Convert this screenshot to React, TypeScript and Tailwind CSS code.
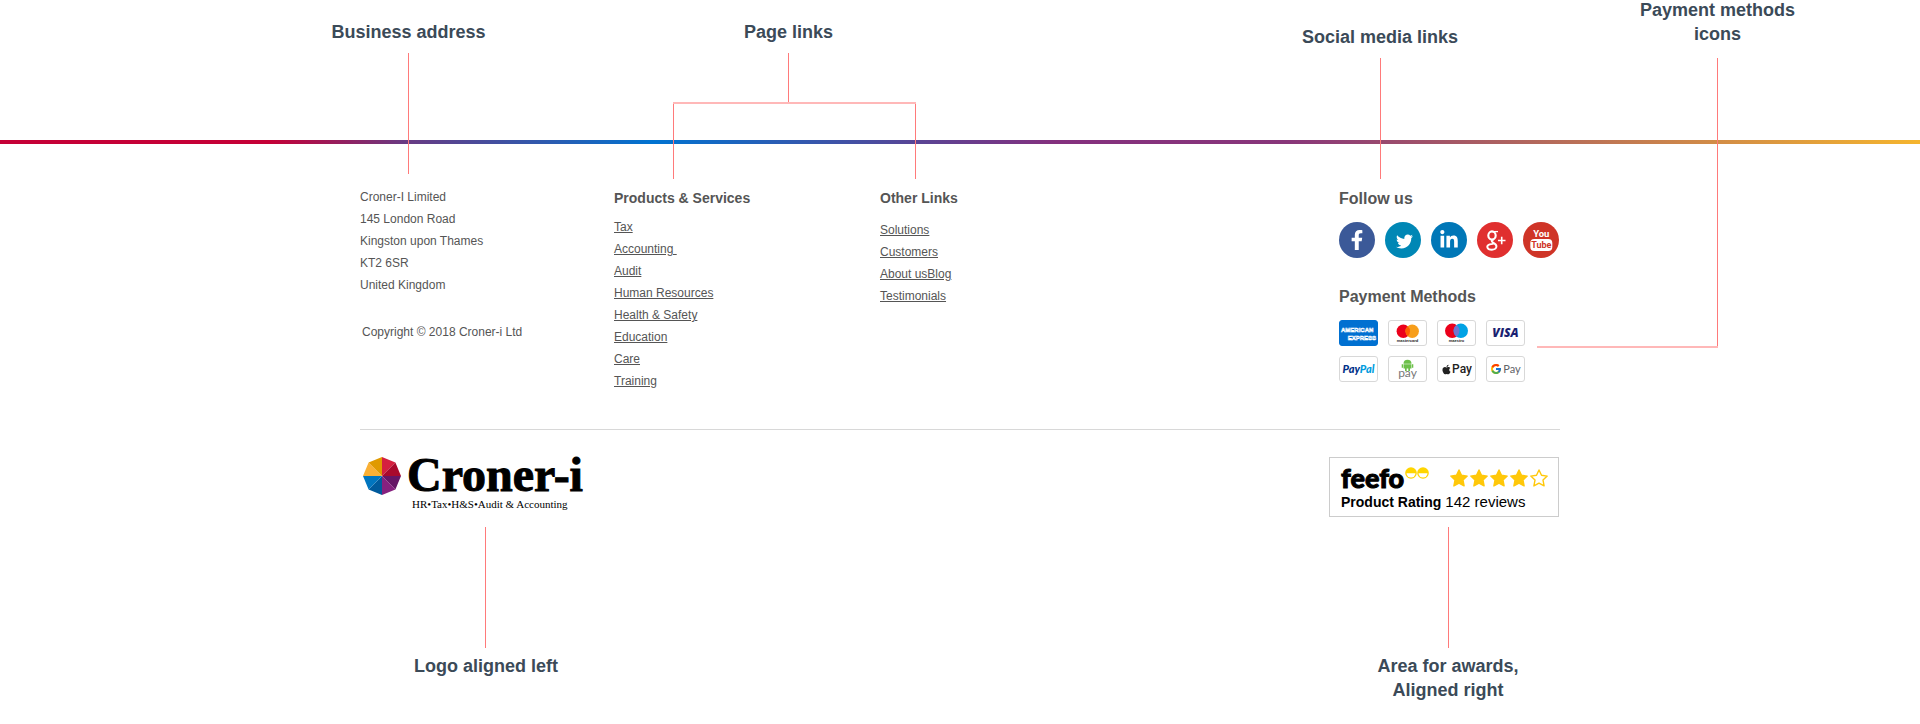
import React from "react";
import { FaFacebookF, FaTwitter, FaLinkedinIn, FaApple } from "react-icons/fa";
import { FcGoogle } from "react-icons/fc";

const address = ["Croner-I Limited", "145 London Road", "Kingston upon Thames", "KT2 6SR", "United Kingdom"];
const products = ["Tax", "Accounting\u00a0", "Audit", "Human Resources", "Health & Safety", "Education", "Care", "Training"];
const others = ["Solutions", "Customers", "About usBlog", "Testimonials"];

function Callout({ lines, className = "" }: { lines: string[]; className?: string }) {
  return (
    <div className={`flex justify-center text-center text-lg leading-6 font-bold whitespace-nowrap text-[#3b4a58] ${className}`}>
      <p>
        {lines.map((line) => (
          <span key={line} className="block">{line}</span>
        ))}
      </p>
    </div>
  );
}

function Connectors() {
  return (
    <svg
      className="pointer-events-none absolute top-0 left-0 z-10 h-[650px] w-full overflow-visible"
      fill="none"
      stroke="#ff7a7a"
      aria-hidden="true"
    >
      <path d="M48.5 53V174M428.5 53V102M313.5 102V179M555.5 102V179M1020.5 58V179M1357.5 58V348M125.5 527V648M1088.5 527V648" />
      <path d="M313 103H556M1177 347H1358" stroke="#ffb8b8" strokeWidth="2" />
    </svg>
  );
}

function LinkList({ items }: { items: string[] }) {
  return (
    <ul>
      {items.map((item) => (
        <li key={item}>
          <a href="#" className="underline">{item}</a>
        </li>
      ))}
    </ul>
  );
}

function Social({ label, className, children }: { label: string; className: string; children: React.ReactNode }) {
  return (
    <a href="#" aria-label={label} className={`flex size-9 items-center justify-center rounded-full text-white ${className}`}>
      {children}
    </a>
  );
}

function Card({ label, children, className = "border-[#d8d8d8] bg-white" }: { label: string; children: React.ReactNode; className?: string }) {
  return (
    <li aria-label={label} className={`flex h-[26px] w-[39px] items-center justify-center overflow-hidden rounded-[3px] border ${className}`}>
      {children}
    </li>
  );
}

function GooglePlus() {
  return (
    <svg viewBox="0 0 36 36" className="size-9" fill="none" stroke="#fff">
      <ellipse cx="15" cy="13.500" rx="3.700" ry="4.100" strokeWidth="2.100" />
      <path d="M15.500 9.600H21" strokeWidth="1.300" />
      <path d="M16.500 17.400c-2 1-2.300 1.900-.8 3l2.200 1.500c2.700 1.900 1.800 5.800-3 5.800-5.400 0-5.900-4.300-2.200-5.400 1.500-.4 2.700-.5 3.900-.4" strokeWidth="1.900" />
      <path d="M21 18.500H28.500M24.700 14.700V22.300" strokeWidth="1.600" />
    </svg>
  );
}

function YouTube() {
  return (
    <svg viewBox="0 0 36 36" className="size-9" fontFamily="'Liberation Sans Narrow', Roboto, sans-serif" fontWeight="700" textAnchor="middle">
      <text x="18.300" y="15.200" fontSize="9.500" fill="#fff">You</text>
      <rect x="7.300" y="17" width="22" height="12" rx="4" fill="#fff" />
      <text x="18.300" y="26.300" fontSize="9" fill="#cf3427">Tube</text>
    </svg>
  );
}

function Octagon() {
  const wedges = [
    ["#d5203f", "M19 19V0L32.400 5.600Z"],
    ["#a90a2d", "M19 19L32.400 5.600L38 19Z"],
    ["#661666", "M19 19H38L32.400 32.400Z"],
    ["#86217f", "M19 19L32.400 32.400L19 38Z"],
    ["#005a9c", "M19 19V38L5.600 32.400Z"],
    ["#0075bf", "M19 19L5.600 32.400L0 19Z"],
    ["#fbb034", "M19 19H0L5.600 5.600Z"],
    ["#e09a00", "M19 19L5.600 5.600L19 0Z"],
  ];
  return (
    <svg viewBox="0 0 38 38" className="size-[38px]" aria-hidden="true">
      {wedges.map(([fill, d]) => (
        <path key={d} fill={fill} d={d} />
      ))}
    </svg>
  );
}

function Star({ filled }: { filled: boolean }) {
  return (
    <svg viewBox="0 0 20 20" className="size-5" fill={filled ? "#ffc80a" : "none"} stroke="#ffc80a" strokeWidth="1.400" strokeLinejoin="round" aria-hidden="true">
      <path d="M10 2l2.500 5.300 5.700.8-4.200 4 1.100 5.800L10 15.200l-5.100 2.700L6 12.100 1.800 8.100l5.700-.8z" />
    </svg>
  );
}

function FeefoEyes() {
  return (
    <svg viewBox="0 0 24 12" className="h-3 w-6" aria-hidden="true">
      {[6, 18].map((cx) => (
        <g key={cx}>
          <circle cx={cx} cy="6" r="5.800" fill="#ffd500" />
          <path d={`M${cx - 4.500} 6.300H${cx + 4.500}A4.500 4.200 0 0 1 ${cx - 4.500} 6.300Z`} fill="#fff" />
        </g>
      ))}
    </svg>
  );
}

export default function App() {
  return (
    <div className="overflow-x-hidden bg-white font-['Liberation_Sans',Arial,sans-serif] text-[#555]">
      <div className="relative mx-auto w-full max-w-[1200px]">
        <Connectors />
      </div>
      <div className="mx-auto grid h-[140px] w-full max-w-[1200px] grid-cols-[97px_663px_520px_155px]">
        <Callout lines={["Business address"]} className="pt-5" />
        <Callout lines={["Page links"]} className="pt-5" />
        <Callout lines={["Social media links"]} className="pt-[25px]" />
        <Callout lines={["Payment methods", "icons"]} className="-mt-0.5" />
      </div>

      <footer>
        <div className="h-1 bg-[linear-gradient(90deg,#c50036_14%,#6a3a82_21%,#0073d1_34%,#5b4494_48%,#84307e_55%,#88367a_67%,#f5b52e_100%)]" />
        <div className="mx-auto w-full max-w-[1200px] pt-[42px]">
          <div className="grid h-[244px] grid-cols-[254px_266px_459px_221px] items-start border-b border-[#d8d8d8] text-xs leading-[22px]">
            <address className="not-italic">
              {address.map((line) => (
                <p key={line}>{line}</p>
              ))}
              <p className="mt-[25px] pl-0.5">Copyright © 2018 Croner-i Ltd</p>
            </address>
            <nav aria-label="Products & Services" className="pt-px">
              <h2 className="mb-[7px] text-sm leading-[22px] font-bold">Products &amp; Services</h2>
              <LinkList items={products} />
            </nav>
            <nav aria-label="Other Links" className="pt-px">
              <h2 className="mb-2.5 text-sm leading-[22px] font-bold">Other Links</h2>
              <LinkList items={others} />
            </nav>
            <div className="pt-px">
              <h2 className="text-base leading-6 font-bold">Follow us</h2>
              <div className="mt-[11px] flex gap-2.5">
                <Social label="Facebook" className="bg-[#3b5998]"><FaFacebookF className="size-5" /></Social>
                <Social label="Twitter" className="bg-[#0087b5] pt-0.5 pl-0.5"><FaTwitter className="size-[17px]" /></Social>
                <Social label="LinkedIn" className="bg-[#0077b7]"><FaLinkedinIn className="size-5" /></Social>
                <Social label="Google Plus" className="bg-[#e02f2f]"><GooglePlus /></Social>
                <Social label="YouTube" className="bg-[#cf3427]"><YouTube /></Social>
              </div>
              <h2 className="mt-[27px] text-base leading-6 font-bold">Payment Methods</h2>
              <ul className="mt-[11px] grid w-fit grid-cols-4 gap-2.5">
                <Card label="American Express" className="border-[#0070d1] bg-[#0070d1]">
                  <svg viewBox="0 0 37 24" className="h-6 w-[37px] shrink-0" fill="none" stroke="#fff" strokeWidth="0.600" fontSize="6" fontWeight="700">
                    <text x="1" y="10.500">AMERICAN</text>
                    <text x="36" y="18.500" textAnchor="end">EXPRESS</text>
                  </svg>
                </Card>
                <Card label="Mastercard">
                  <svg viewBox="0 0 37 24" className="h-6 w-[37px] shrink-0">
                    <circle cx="14.300" cy="10.300" r="6.700" fill="#eb001b" />
                    <circle cx="23.200" cy="10.300" r="6.700" fill="#f79e1b" />
                    <path d="M18.750 5.300a6.700 6.700 0 0 1 0 10a6.700 6.700 0 0 1 0-10z" fill="#ff5f00" />
                    <text x="18.500" y="20.800" textAnchor="middle" fontSize="4" fontWeight="700" fill="#222">mastercard</text>
                  </svg>
                </Card>
                <Card label="Maestro">
                  <svg viewBox="0 0 37 24" className="h-6 w-[37px] shrink-0">
                    <circle cx="14.200" cy="9.800" r="7.200" fill="#eb001b" />
                    <circle cx="22.800" cy="9.800" r="7.200" fill="#00a2e5" />
                    <path d="M18.500 4a7.200 7.200 0 0 1 0 11.600a7.200 7.200 0 0 1 0-11.600z" fill="#7375cf" />
                    <text x="18.500" y="21" textAnchor="middle" fontSize="4" fontWeight="700" fill="#222">maestro</text>
                  </svg>
                </Card>
                <Card label="Visa">
                  <span className="font-['Open_Sans',sans-serif] text-xs leading-4 font-extrabold text-[#1a1f71] italic">VISA</span>
                </Card>
                <Card label="PayPal">
                  <span className="font-['Lato',sans-serif] text-[11px] leading-4 font-black text-[#003087] italic">
                    Pay<span className="text-[#009cde]">Pal</span>
                  </span>
                </Card>
                <Card label="Android Pay">
                  <svg viewBox="0 0 37 24" className="h-6 w-[37px] shrink-0">
                    <path
                      fill="#6cc04a"
                      d="M14.500 6.700a4 4 0 0 1 8 0zM14.500 7.300h8v4.200h-8zM12.700 7.300h1.300v3.500h-1.300zM23 7.300h1.300v3.500h-1.300zM16 11h1.700v3h-1.700zM19.300 11h1.700v3h-1.700z"
                    />
                    <text x="18.500" y="20" textAnchor="middle" fontFamily="Lato, sans-serif" fontSize="12" fill="#777">pay</text>
                  </svg>
                </Card>
                <Card label="Apple Pay">
                  <span className="flex items-center font-['Roboto',sans-serif] text-xs leading-4 font-medium text-[#222]">
                    <FaApple className="size-[11px]" />Pay
                  </span>
                </Card>
                <Card label="Google Pay">
                  <span className="flex items-center gap-px font-['Lato',sans-serif] text-[11px] leading-4 text-[#5f6368]">
                    <FcGoogle className="size-3" />Pay
                  </span>
                </Card>
              </ul>
            </div>
          </div>

          <div className="flex items-start justify-between pt-[27px]">
            <a href="#" aria-label="Croner-i home" className="flex gap-1.5 pl-[3px] font-['Liberation_Serif',serif] text-black">
              <Octagon />
              <span>
                <span className="block text-5xl leading-9 font-bold [-webkit-text-stroke:1px_black]">Croner-i</span>
                <span className="block pt-[3px] pl-[5px] text-[11px] leading-4">HR•Tax•H&amp;S•Audit &amp; Accounting</span>
              </span>
            </a>
            <a href="#" className="mr-px block h-[60px] w-[230px] border border-[#ccc] pr-[9px] pl-[11px] text-black">
              <span className="flex items-start justify-between pt-1">
                <span className="flex items-start">
                  <span className="font-['Lato',sans-serif] text-[27px] leading-8 font-black [-webkit-text-stroke:1px_black]">feefo</span>
                  <span className="pt-[5px] pl-px"><FeefoEyes /></span>
                </span>
                <span className="flex pt-1.5">
                  {[true, true, true, true, false].map((filled, i) => (
                    <Star key={i} filled={filled} />
                  ))}
                </span>
              </span>
              <span className="flex gap-1 text-[15px] leading-4">
                <b className="text-sm leading-4">Product Rating</b>
                <span>142 reviews</span>
              </span>
            </a>
          </div>
        </div>
      </footer>

      <div className="mx-auto grid w-full max-w-[1200px] grid-cols-[252px_724px_224px] pt-[137px] pb-2">
        <Callout lines={["Logo aligned left"]} />
        <Callout lines={["Area for awards,", "Aligned right"]} className="col-start-3" />
      </div>
    </div>
  );
}
